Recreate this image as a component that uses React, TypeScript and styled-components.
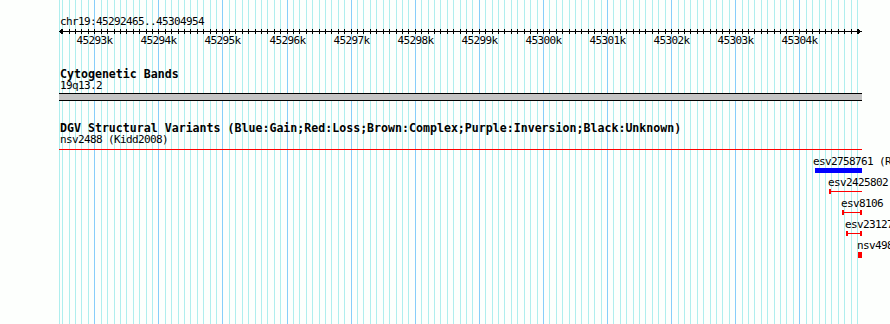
import React from 'react';
import styled, { createGlobalStyle } from 'styled-components';

const START = 45292465;
const END = 45304954;
const ORIGIN = 59; // left pixel of the track area
const TRACK_W = 803; // 59..861

const xOf = (bp: number) => Math.round(94.3 + (bp - 45293000) * 0.064091);

type GridLine = { x: number; major: boolean };
const gridLines: GridLine[] = [{ x: ORIGIN, major: false }];
for (let bp = 45292500; bp <= 45304900; bp += 100) {
  gridLines.push({ x: xOf(bp), major: bp % 1000 === 0 });
}
const majors: number[] = [];
for (let bp = 45293000; bp <= 45304000; bp += 1000) majors.push(bp);

type Feature = {
  name: string;
  labelX: number;
  x: number;
  width: number;
  kind: 'box' | 'span' | 'block';
  color: string;
  leftCap?: boolean;
  rightCap?: boolean;
};

const features: Feature[] = [
  { name: 'esv2758761 (Redon2006)', labelX: 813, x: 815, width: 47, kind: 'box', color: '#0000ff' },
  { name: 'esv2425802 (Conrad2009)', labelX: 828, x: 829, width: 33, kind: 'span', color: '#ff0000', leftCap: true },
  { name: 'esv8106 (Perry2008)', labelX: 841, x: 842, width: 20, kind: 'span', color: '#ff0000', leftCap: true, rightCap: true },
  { name: 'esv2312777 (Itsara2009)', labelX: 845, x: 846, width: 16, kind: 'span', color: '#ff0000', leftCap: true, rightCap: true },
  { name: 'nsv498123 (Wang2007)', labelX: 857, x: 858, width: 4, kind: 'block', color: '#ff0000' },
];

const GlobalStyle = createGlobalStyle`
  html, body {
    margin: 0;
    padding: 0;
    background: #fdfffd;
    overflow: hidden;
  }
`;

const Page = styled.div`
  position: relative;
  width: 890px;
  height: 324px;
  overflow: hidden;
  background: #fdfffd;
  color: #000;
  font-family: "DejaVu Sans Mono", "Liberation Mono", monospace;
`;

const GridLayer = styled.svg`
  position: absolute;
  left: 0;
  top: 0;
  z-index: 0;
  display: block;
`;

const Tracks = styled.div`
  position: relative;
  z-index: 1;
  display: flex;
  flex-direction: column;
  padding-left: ${ORIGIN}px;
`;

const Section = styled.section<{ $top: number }>`
  display: flex;
  flex-direction: column;
  margin-top: ${(p) => p.$top}px;
`;

const SmallText = styled.div`
  font-size: 11px;
  letter-spacing: -0.62px;
  line-height: 11px;
  height: 11px;
  padding-left: 1px;
  white-space: nowrap;
`;

const TrackTitle = styled.div`
  font-size: 11.6px;
  font-weight: bold;
  line-height: 12px;
  height: 12px;
  padding-left: 1px;
  white-space: nowrap;
`;

const RulerSvg = styled.svg`
  display: block;
`;

const TickRow = styled.div`
  position: relative;
  height: 11px;
  width: ${TRACK_W}px;
`;

const TickLabel = styled.span`
  position: absolute;
  top: 0;
  font-size: 11px;
  letter-spacing: -0.62px;
  line-height: 11px;
  white-space: nowrap;
  transform: translateX(-50%);
`;

const Band = styled.div`
  margin-top: 2px;
  width: ${TRACK_W}px;
  height: 6px;
  background: #c4c4c4;
  border-top: 1px solid #000;
  border-bottom: 1px solid #000;
`;

const Divider = styled.div`
  margin-top: 4px;
  width: ${TRACK_W}px;
  height: 1px;
  background: #ff0000;
`;

const FeatureList = styled.div`
  display: flex;
  flex-direction: column;
  gap: 4px;
  margin-top: 6px;
`;

const FeatureItem = styled.div`
  display: flex;
  flex-direction: column;
  align-items: flex-start;
  white-space: nowrap;
`;

const FeatureLabel = styled.div`
  font-size: 11px;
  letter-spacing: -0.62px;
  line-height: 11px;
  height: 11px;
  white-space: nowrap;
`;

const BoxGlyph = styled.div<{ $color: string; $h: number }>`
  margin-top: 1px;
  height: ${(p) => p.$h}px;
  background: ${(p) => p.$color};
`;

const SpanGlyph = styled.div`
  margin-top: 1px;
  height: 5px;
  display: flex;
  align-items: center;
`;

const Cap = styled.div<{ $color: string }>`
  width: 2px;
  height: 5px;
  flex: none;
  background: ${(p) => p.$color};
`;

const SpanLine = styled.div<{ $color: string }>`
  flex: 1;
  height: 1px;
  background: ${(p) => p.$color};
`;

function FeatureGlyph({ f }: { f: Feature }) {
  const offset = { marginLeft: f.x - f.labelX, width: f.width };
  if (f.kind === 'box') return <BoxGlyph $color={f.color} $h={5} style={offset} />;
  if (f.kind === 'block') return <BoxGlyph $color={f.color} $h={6} style={offset} />;
  return (
    <SpanGlyph style={offset}>
      {f.leftCap && <Cap $color={f.color} />}
      <SpanLine $color={f.color} />
      {f.rightCap && <Cap $color={f.color} />}
    </SpanGlyph>
  );
}

export default function App() {
  return (
    <>
      <GlobalStyle />
      <Page>
        <GridLayer width={890} height={324} shapeRendering="crispEdges">
          {gridLines.map((g, i) => (
            <rect
              key={i}
              x={g.x}
              y={0}
              width={1}
              height={324}
              fill={g.major ? '#87cefa' : '#afeeee'}
            />
          ))}
        </GridLayer>
        <Tracks>
          <Section $top={16}>
            <SmallText>
              chr19:{START}..{END}
            </SmallText>
            <RulerSvg width={TRACK_W} height={8} shapeRendering="crispEdges">
              <rect x={0} y={4} width={TRACK_W - 1} height={1} fill="#000" />
              {gridLines.slice(1).map((g, i) => (
                <rect key={i} x={g.x - ORIGIN} y={2} width={1} height={5} fill="#000" />
              ))}
              <polyline points="4,2 0,4.5 4,7" fill="none" stroke="#000" strokeWidth={1} />
              <polyline points="798,2 802,4.5 798,7" fill="none" stroke="#000" strokeWidth={1} />
            </RulerSvg>
            <TickRow>
              {majors.map((bp) => (
                <TickLabel key={bp} style={{ left: xOf(bp) - ORIGIN + 0.5 }}>
                  {bp / 1000}k
                </TickLabel>
              ))}
            </TickRow>
          </Section>

          <Section $top={22}>
            <TrackTitle>Cytogenetic Bands</TrackTitle>
            <SmallText>19q13.2</SmallText>
            <Band />
          </Section>

          <Section $top={21}>
            <TrackTitle>
              DGV Structural Variants (Blue:Gain;Red:Loss;Brown:Complex;Purple:Inversion;Black:Unknown)
            </TrackTitle>
            <SmallText>nsv2488 (Kidd2008)</SmallText>
            <Divider />
            <FeatureList>
              {features.map((f) => (
                <FeatureItem key={f.name} style={{ marginLeft: f.labelX - ORIGIN }}>
                  <FeatureLabel>{f.name}</FeatureLabel>
                  <FeatureGlyph f={f} />
                </FeatureItem>
              ))}
            </FeatureList>
          </Section>
        </Tracks>
      </Page>
    </>
  );
}
